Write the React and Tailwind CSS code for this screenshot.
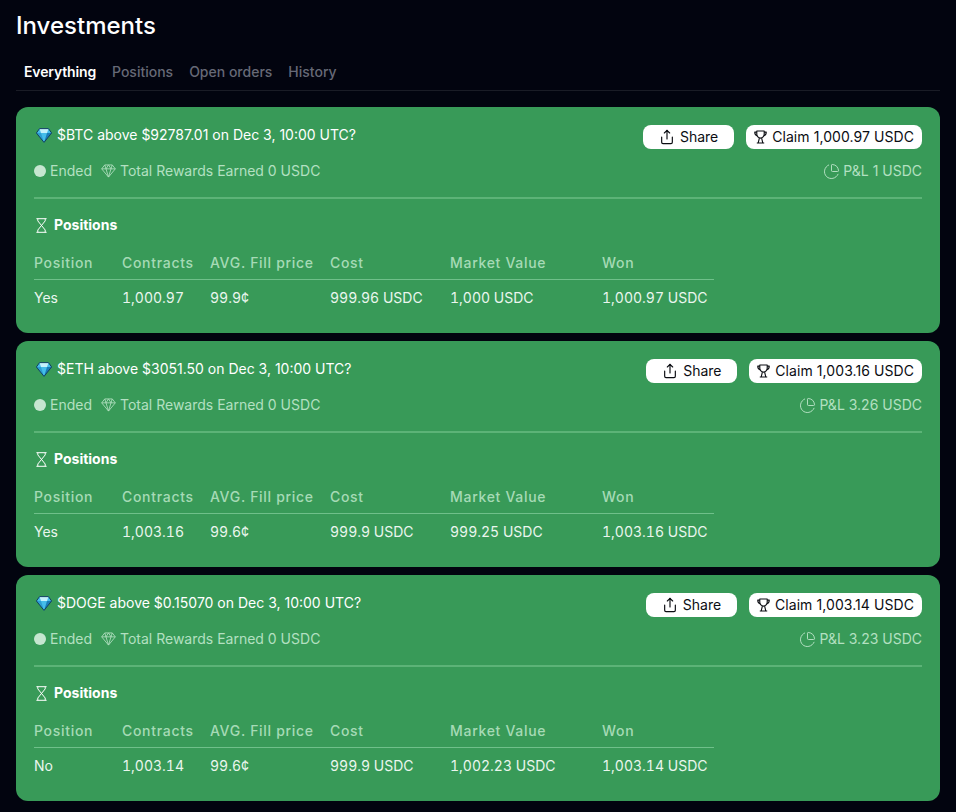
import React from 'react';
import { Share, ChartPie } from 'lucide-react';

const tabs = ['Everything', 'Positions', 'Open orders', 'History'];

const markets = [
  { title: '$BTC above $92787.01 on Dec 3, 10:00 UTC?', claim: '1,000.97', pnl: '1', position: 'Yes', contracts: '1,000.97', fill: '99.9¢', cost: '999.96 USDC', value: '1,000 USDC', won: '1,000.97 USDC' },
  { title: '$ETH above $3051.50 on Dec 3, 10:00 UTC?', claim: '1,003.16', pnl: '3.26', position: 'Yes', contracts: '1,003.16', fill: '99.6¢', cost: '999.9 USDC', value: '999.25 USDC', won: '1,003.16 USDC' },
  { title: '$DOGE above $0.15070 on Dec 3, 10:00 UTC?', claim: '1,003.14', pnl: '3.23', position: 'No', contracts: '1,003.14', fill: '99.6¢', cost: '999.9 USDC', value: '1,002.23 USDC', won: '1,003.14 USDC' },
];

const columns = ['Position', 'Contracts', 'AVG. Fill price', 'Cost', 'Market Value', 'Won'];

const DiamondEmoji = () => (
  <svg width="16" height="15" viewBox="0 0 16 15" className="shrink-0">
    <path d="M3.5 0.6h9L15.6 5 8 14.4 0.4 5z" fill="#45bdea" />
    <path d="M3.5 0.6h9L11 5H5z" fill="#c4f1fc" />
    <path d="M0.4 5H5L8 14.4z" fill="#2c9fd4" />
    <path d="M15.6 5H11L8 14.4z" fill="#1a7db8" />
    <path d="M3.5 0.6h9L15.6 5 8 14.4 0.4 5z" fill="none" stroke="#123f5e" strokeWidth="1" strokeLinejoin="round" />
  </svg>
);

const GemIcon = ({ className }) => (
  <svg viewBox="0 0 16 15" fill="none" stroke="currentColor" strokeWidth="0.9" strokeLinejoin="round" className={className}>
    <path d="M4 1h8l3.3 4.2L8 14 .7 5.2z" />
    <path d="M.7 5.2h14.6M5.3 5.2 8 14l2.7-8.8M4 1l1.3 4.2L8 1l2.7 4.2L12 1" />
  </svg>
);

const HourglassIcon = ({ className }) => (
  <svg viewBox="0 0 11 15" fill="none" stroke="currentColor" strokeWidth="1" className={className}>
    <path d="M.4 .7h10.2M.4 14.3h10.2" />
    <path d="M1.8.7v2.2L9.2 12v2.3M9.2.7v2.2L1.8 12v2.3" />
  </svg>
);

const TrophyIcon = ({ className }) => (
  <svg viewBox="0 0 14 15" fill="none" stroke="currentColor" strokeWidth="1.2" strokeLinejoin="round" className={className}>
    <path d="M3 1h8v3.5c0 2.3-1.8 4.2-4 4.2S3 6.8 3 4.5z" />
    <path d="M3 2.2H.8c0 2.4 1 3.7 2.7 4M11 2.2h2.2c0 2.4-1 3.7-2.7 4" />
    <path d="M5.8 8.6 4.6 13.6M8.2 8.6l1.2 5M3 14h8" />
  </svg>
);

const MarketCard = ({ market }) => (
  <div className="bg-[#389a58] rounded-xl h-[226px] px-[18px] pt-[18px]">
    <div className="flex items-start justify-between">
      <div className="flex items-center gap-[5px] h-[20px] pl-[2px] text-sm text-white">
        <DiamondEmoji />
        <span>{market.title}</span>
      </div>
      <div className="flex items-center gap-3">
        <button className="w-[91px] h-6 bg-white rounded-lg flex items-center justify-center gap-[5px] text-sm text-[#0b0d12]">
          <Share className="w-4 h-4" strokeWidth={1.75} />
          Share
        </button>
        <button className="h-6 px-2 bg-white rounded-lg flex items-center gap-[5px] text-sm tracking-[0.07px] text-[#0b0d12]">
          <TrophyIcon className="w-[13px] h-[14px]" />
          Claim {market.claim} USDC
        </button>
      </div>
    </div>

    <div className="flex items-center justify-between mt-3 h-5 text-sm text-[#b3e0c1]">
      <div className="flex items-center">
        <span className="w-3 h-3 rounded-full bg-[#c6e6d0]"></span>
        <span className="ml-1">Ended</span>
        <GemIcon className="w-[15px] h-[14px] ml-[9px]" />
        <span className="ml-1">Total Rewards Earned 0 USDC</span>
      </div>
      <div className="flex items-center gap-[3px]">
        <ChartPie className="w-[17px] h-[17px]" strokeWidth={1.4} />
        <span>P&amp;L {market.pnl} USDC</span>
      </div>
    </div>

    <div className="border-t-2 border-[#5cb377] mt-[16px]"></div>

    <div className="flex items-center gap-[7px] mt-4 h-5 pl-[2px] text-sm font-bold text-white">
      <HourglassIcon className="w-[11px] h-[15px]" />
      <span>Positions</span>
    </div>

    <div className="w-[680px] mt-[18px] text-sm">
      <div className="grid grid-cols-[88px_88px_120px_120px_152px_112px] h-[27px] border-b border-[#6fc08a] font-medium tracking-[0.7px] text-[#a6dab6]">
        {columns.map((col) => (
          <div key={col}>{col}</div>
        ))}
      </div>
      <div className="grid grid-cols-[88px_88px_120px_120px_152px_112px] pt-2 tabular-nums text-[#eaf6ee]">
        <div>{market.position}</div>
        <div>{market.contracts}</div>
        <div>{market.fill}</div>
        <div>{market.cost}</div>
        <div>{market.value}</div>
        <div>{market.won}</div>
      </div>
    </div>
  </div>
);

export default function App() {
  return (
    <div className="min-h-[812px] bg-[#02040f] px-4 font-['Inter',sans-serif]">
      <h1 className="pt-[10px] text-2xl font-medium leading-8 text-white">Investments</h1>
      <div className="flex gap-4 mt-[14px] h-[35px] px-2 border-b border-[#1a1c26] text-sm leading-8">
        {tabs.map((tab, i) => (
          <span key={tab} className={i === 0 ? 'font-semibold tracking-[-0.15px] text-white' : 'font-medium text-[#666976]'}>
            {tab}
          </span>
        ))}
      </div>
      <div className="flex flex-col gap-2 mt-4">
        {markets.map((market) => (
          <MarketCard key={market.title} market={market} />
        ))}
      </div>
    </div>
  );
}
